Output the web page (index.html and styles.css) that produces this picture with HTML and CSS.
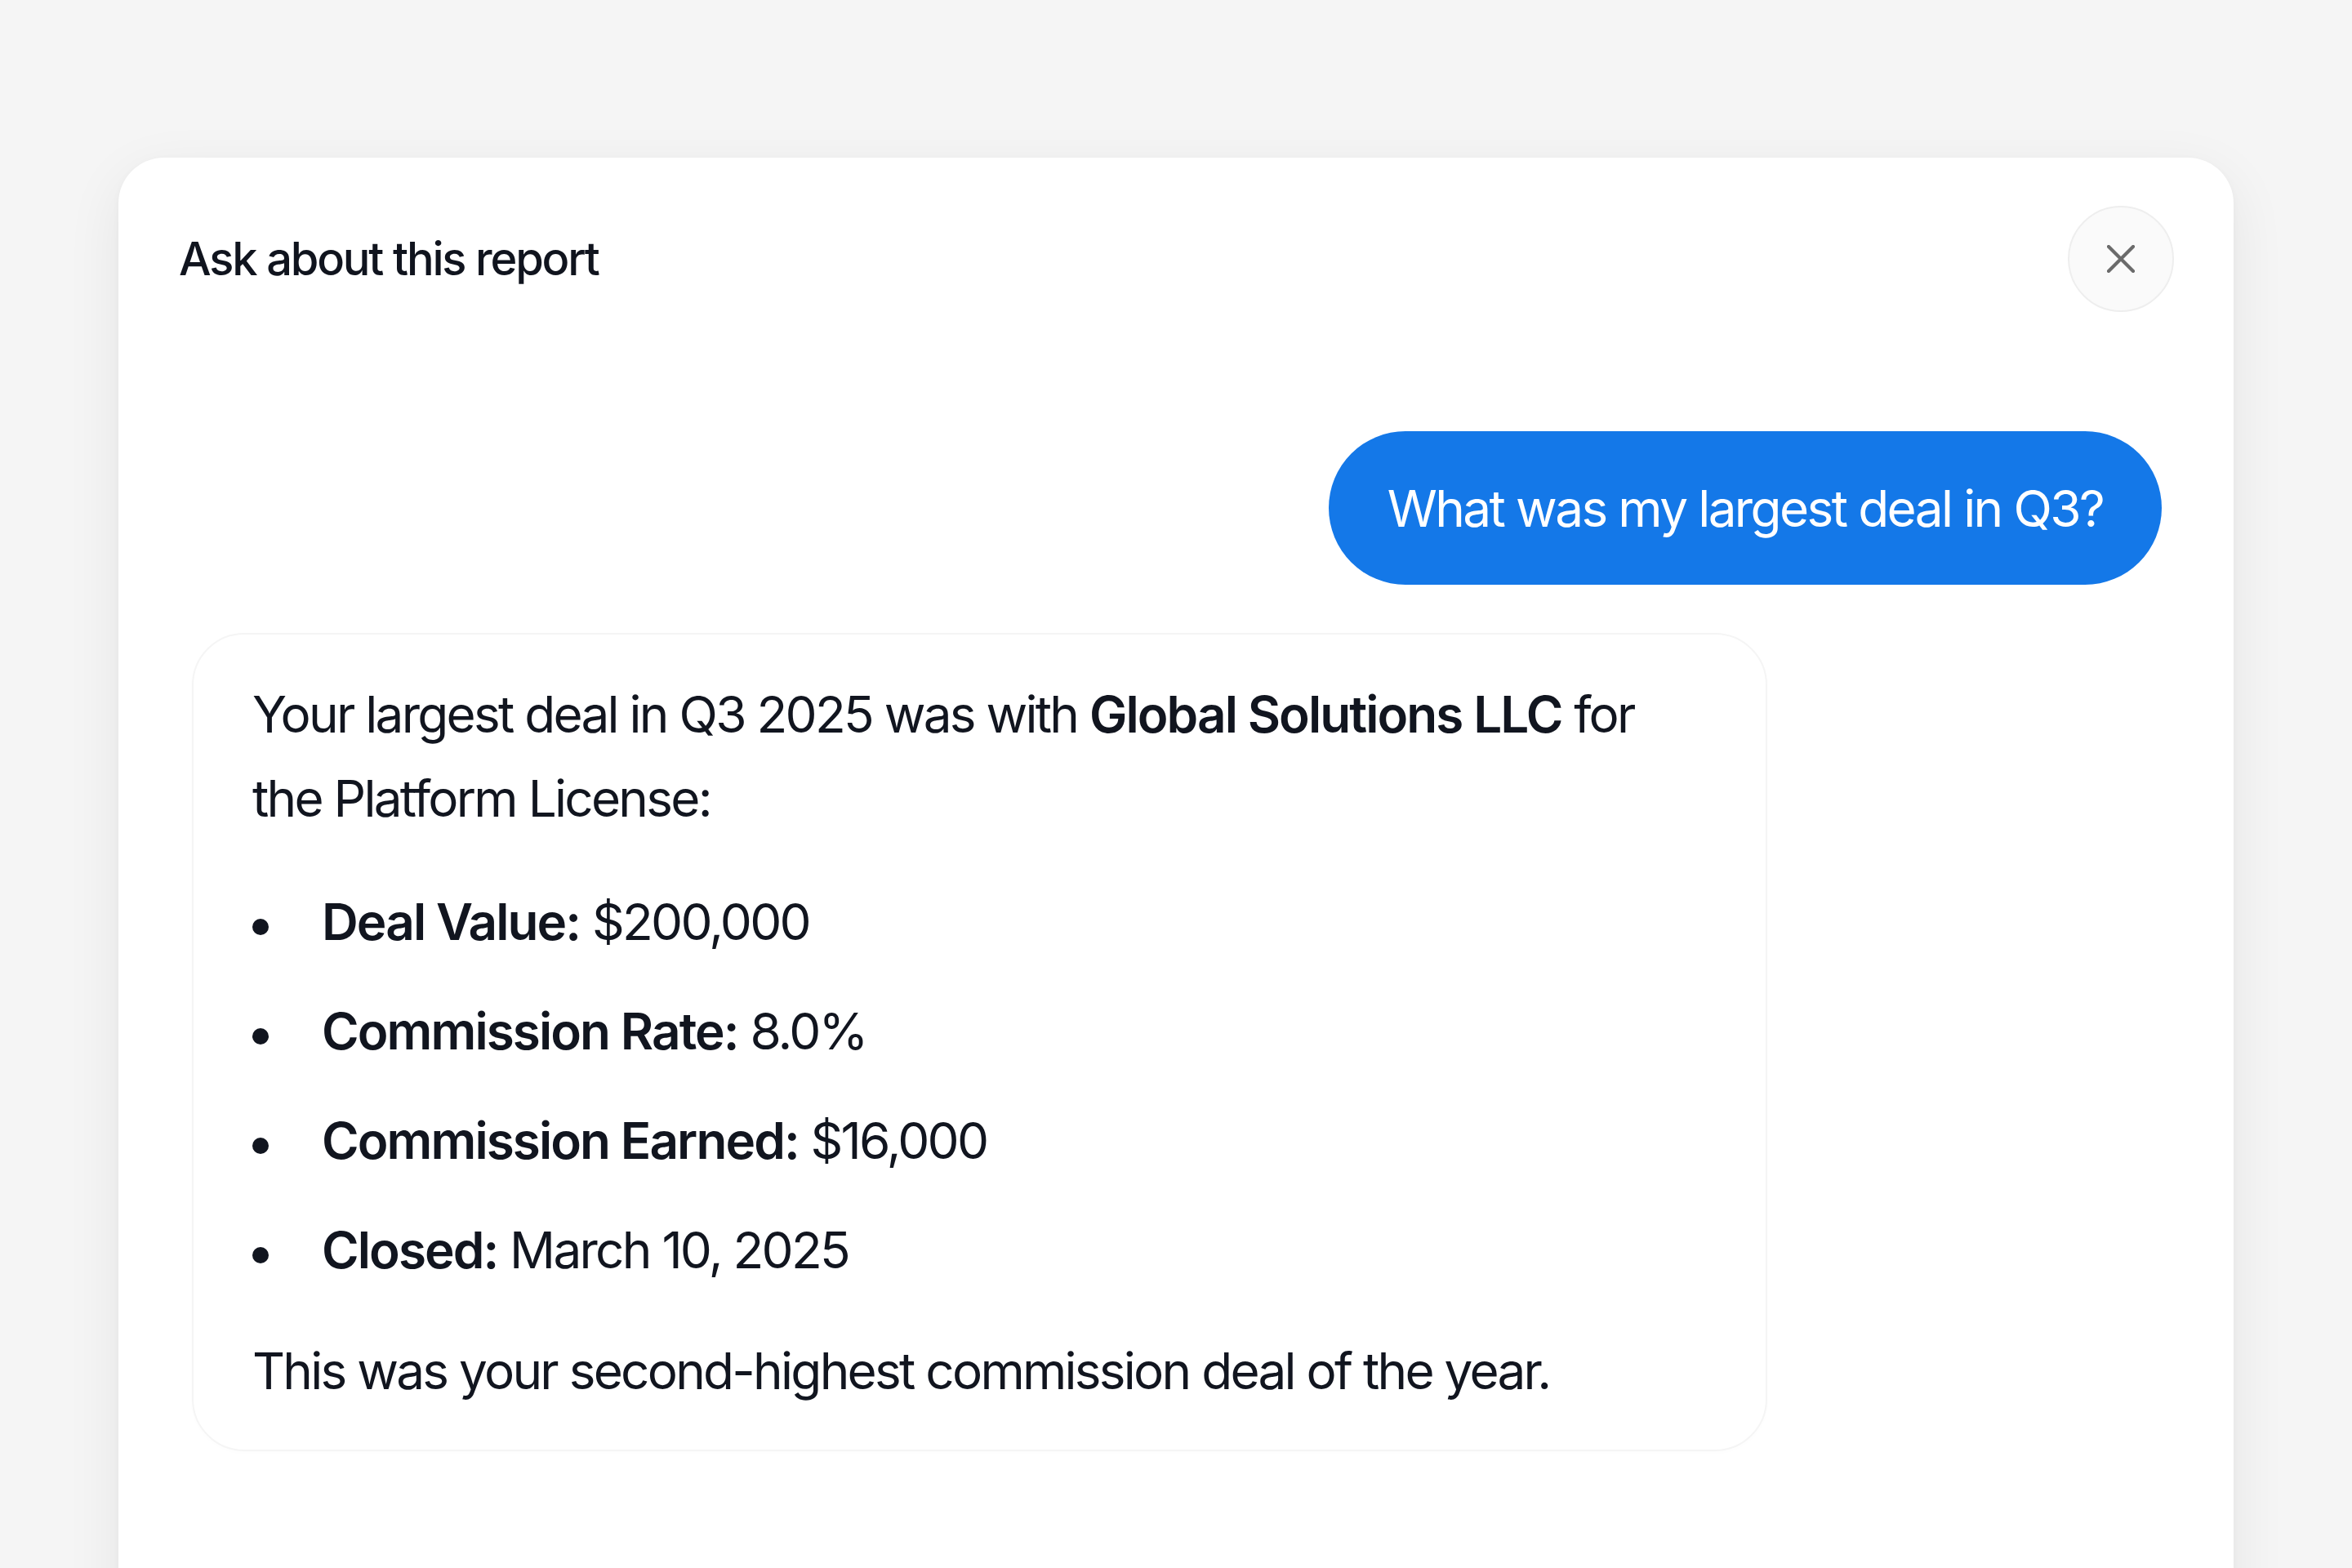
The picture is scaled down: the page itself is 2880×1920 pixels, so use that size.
FILE: index.html
```html
<!DOCTYPE html>
<html lang="en">
<head>
<meta charset="utf-8">
<title>Ask about this report</title>
<link rel="stylesheet" href="styles.css">
</head>
<body>
<div class="card">
  <div class="header">
    <h1 class="title">Ask about this report</h1>
    <button class="close" aria-label="Close">
      <svg viewBox="0 0 34 34" width="34" height="34"><path d="M2 2 L32 32 M32 2 L2 32" stroke="#6b6b6b" stroke-width="4.2" stroke-linecap="round" fill="none"/></svg>
    </button>
  </div>
  <div class="messages">
    <div class="user-bubble">What was my largest deal in Q3?</div>
    <div class="bot-bubble">
      <p class="para">Your largest deal in Q3 2025 was with <strong>Global Solutions LLC</strong> for the Platform License:</p>
      <ul class="facts">
        <li class="fact"><strong>Deal Value:</strong> $200,000</li>
        <li class="fact"><strong>Commission Rate:</strong> 8.0%</li>
        <li class="fact"><strong>Commission Earned:</strong> $16,000</li>
        <li class="fact"><strong>Closed:</strong> March 10, 2025</li>
      </ul>
      <p class="para">This was your second-highest commission deal of the year.</p>
    </div>
  </div>
</div>
</body>
</html>
```
FILE: styles.css
```css
html, body {
  margin: 0;
  padding: 0;
}
body {
  background: #f5f5f5;
  width: 2880px;
  height: 1920px;
  overflow: hidden;
  font-family: Inter, "Noto Sans", sans-serif;
  color: #11151f;
}
.card {
  margin: 193px 0 0 145px;
  width: 2590px;
  height: 1900px;
  background: #ffffff;
  border-radius: 56px;
  box-shadow: 0 20px 70px rgba(0, 0, 0, 0.07), 0 2px 10px rgba(0, 0, 0, 0.03);
}
.header {
  display: flex;
  align-items: center;
  justify-content: space-between;
  padding: 59px 73px 0 74px;
}
.title {
  margin: 0;
  font-size: 56px;
  font-weight: 500;
  letter-spacing: -0.039em;
  color: #10141e;
}
.close {
  width: 130px;
  height: 130px;
  border-radius: 50%;
  border: 2px solid #eeeeee;
  background: #fafafa;
  display: flex;
  align-items: center;
  justify-content: center;
  padding: 0;
}
.messages {
  display: flex;
  flex-direction: column;
  gap: 59px;
  padding: 146px 88px 0 90px;
}
.user-bubble {
  align-self: flex-end;
  background: #1478e8;
  color: #ffffff;
  border-radius: 999px;
  height: 188px;
  padding: 0 72px;
  display: flex;
  align-items: center;
  font-size: 62px;
  letter-spacing: -0.042em;
}
.bot-bubble {
  align-self: flex-start;
  width: 1929px;
  box-sizing: border-box;
  padding: 46px 75px 45px 72px;
  border: 2px solid #f5f5f5;
  border-radius: 64px;
  background: #ffffff;
  box-shadow: 0 2px 6px rgba(0, 0, 0, 0.012);
  font-size: 62px;
  line-height: 103px;
  letter-spacing: -0.044em;
}
.para {
  margin: 0;
}
.para strong, .fact strong {
  font-weight: 600;
  letter-spacing: -0.031em;
}
.facts {
  list-style: none;
  margin: 48px 0 45px 0;
  padding: 0;
  display: flex;
  flex-direction: column;
  gap: 31px;
}
.fact {
  position: relative;
  padding-left: 85px;
}
.fact::before {
  content: "";
  position: absolute;
  left: 0;
  top: 48px;
  width: 20px;
  height: 20px;
  border-radius: 50%;
  background: #11151f;
}
```
